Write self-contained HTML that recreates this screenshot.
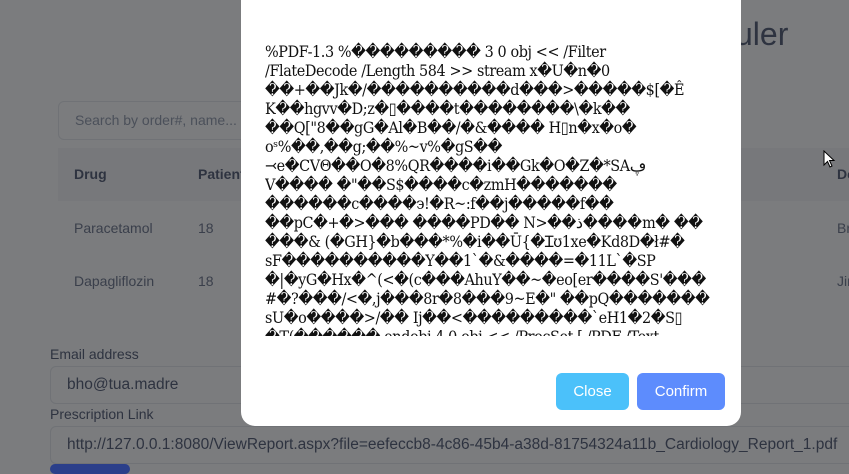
<!DOCTYPE html>
<html><head><meta charset="utf-8"><style>
html,body{margin:0;padding:0;width:849px;height:467px;overflow:hidden;background:#7b7c7e;font-family:"Liberation Sans",sans-serif;}
.abs{position:absolute}
.dark{color:#2e3340}
.inp{position:absolute;border:1px solid #707276;border-radius:6px;background:#7b7c7e;box-sizing:border-box}
.modal{position:absolute;left:241px;top:-20px;width:500px;height:446px;background:#fff;border-radius:14px}
.txt{position:absolute;left:24px;top:62px;width:470px;height:294px;overflow:hidden;font-family:"DejaVu Serif Condensed","DejaVu Serif",serif;font-stretch:condensed;font-size:16px;line-height:19px;color:#111;white-space:nowrap;letter-spacing:-0.4px}
.btn{position:absolute;top:373px;height:37px;border-radius:6px;color:#fff;font-size:15px;text-align:center;line-height:37px}
</style></head><body>
<div class="abs dark" style="left:735px;top:16px;font-size:32px;">uler</div>
<div class="inp" style="left:58px;top:101px;width:300px;height:39px;"></div>
<div class="abs" style="left:75px;top:112px;font-size:14px;color:#4b505a;">Search by order#, name...</div>
<div class="abs" style="left:58px;top:148px;width:800px;height:53px;background:#77787b;"></div>
<div class="abs dark" style="left:74px;top:166px;font-size:14px;font-weight:bold;">Drug</div>
<div class="abs dark" style="left:198px;top:166px;font-size:14px;font-weight:bold;">Patient</div>
<div class="abs dark" style="left:837px;top:166px;font-size:14px;font-weight:bold;">De</div>
<div class="abs" style="left:74px;top:220px;font-size:14px;color:#3a3f4b;">Paracetamol</div>
<div class="abs" style="left:198px;top:220px;font-size:14px;color:#3a3f4b;">18</div>
<div class="abs" style="left:837px;top:220px;font-size:14px;color:#3a3f4b;">Br</div>
<div class="abs" style="left:74px;top:273px;font-size:14px;color:#3a3f4b;">Dapagliflozin</div>
<div class="abs" style="left:198px;top:273px;font-size:14px;color:#3a3f4b;">18</div>
<div class="abs" style="left:837px;top:273px;font-size:14px;color:#3a3f4b;">Jin</div>
<div class="abs" style="left:50px;top:346px;font-size:14px;color:#2e3340;">Email address</div>
<div class="inp" style="left:50px;top:366px;width:810px;height:38px;"></div>
<div class="abs" style="left:67px;top:376px;font-size:15.5px;color:#2e3340;">bho@tua.madre</div>
<div class="abs" style="left:50px;top:406px;font-size:14px;color:#2e3340;">Prescription Link</div>
<div class="inp" style="left:50px;top:426px;width:810px;height:38px;"></div>
<div class="abs" style="left:67px;top:436px;font-size:15.5px;color:#2e3340;white-space:nowrap;">http://127.0.0.1:8080/ViewReport.aspx?file=eefeccb8-4c86-45b4-a38d-81754324a11b_Cardiology_Report_1.pdf</div>
<div class="abs" style="left:50px;top:464px;width:80px;height:10px;background:#2b3f8a;border-radius:5px;"></div>
<div class="modal">
<div class="txt">%PDF-1.3 %��������� 3 0 obj &lt;&lt; /Filter<br>/FlateDecode /Length 584 &gt;&gt; stream x�U�n�0<br>��+��Jk�/����������d���&gt;�����$[�Ê<br>K��hgvv�D;z�▯����t��������\�k��<br>��Q["8��gG�Al�B��/�&amp;���� H▯n�x�o�<br>oˢ%��,��g;��%~v%�gS��<br>⤙e�CVΘ��O�8%QR����i��Gk�O�Z�*SAڥ<br>V���� �"��S$����c�zmH�������<br>������c����э!�R~:f��j�����f��<br>��pC�+�&gt;��� ����PD�� N&gt;��ذ����m� ��<br>���&amp; (�GH}�b���*%�i��Ū{�Ɪʊ1xe�Kd8D�ł#�<br>sF����������Y��1`�&amp;����=�11L`�SP<br>�|�yG�Hx�^(&lt;�(c���AhuY��~�eo[er����S'���<br>#�?���/&lt;�,j���8r�8���9~E�" ��pQ�������<br>sU�o����&gt;/�� Ij��&lt;���������`eH1�2�S▯<br>�T(������ endobj 4 0 obj &lt;&lt; /ProcSet [ /PDF /Text</div>
<div class="btn" style="left:315px;width:73px;background:#4bc1fa;top:393px;">Close</div>
<div class="btn" style="left:396px;width:88px;background:#5d8cfd;top:393px;">Confirm</div>
</div>
<svg class="abs" style="left:823px;top:150px" width="14" height="20" viewBox="0 0 14 20"><path d="M1 1 L1 15 L4.5 11.5 L7 17 L9 16 L6.5 10.5 L11 10.5 Z" fill="#fff" stroke="#000" stroke-width="1"/></svg>
</body></html>
